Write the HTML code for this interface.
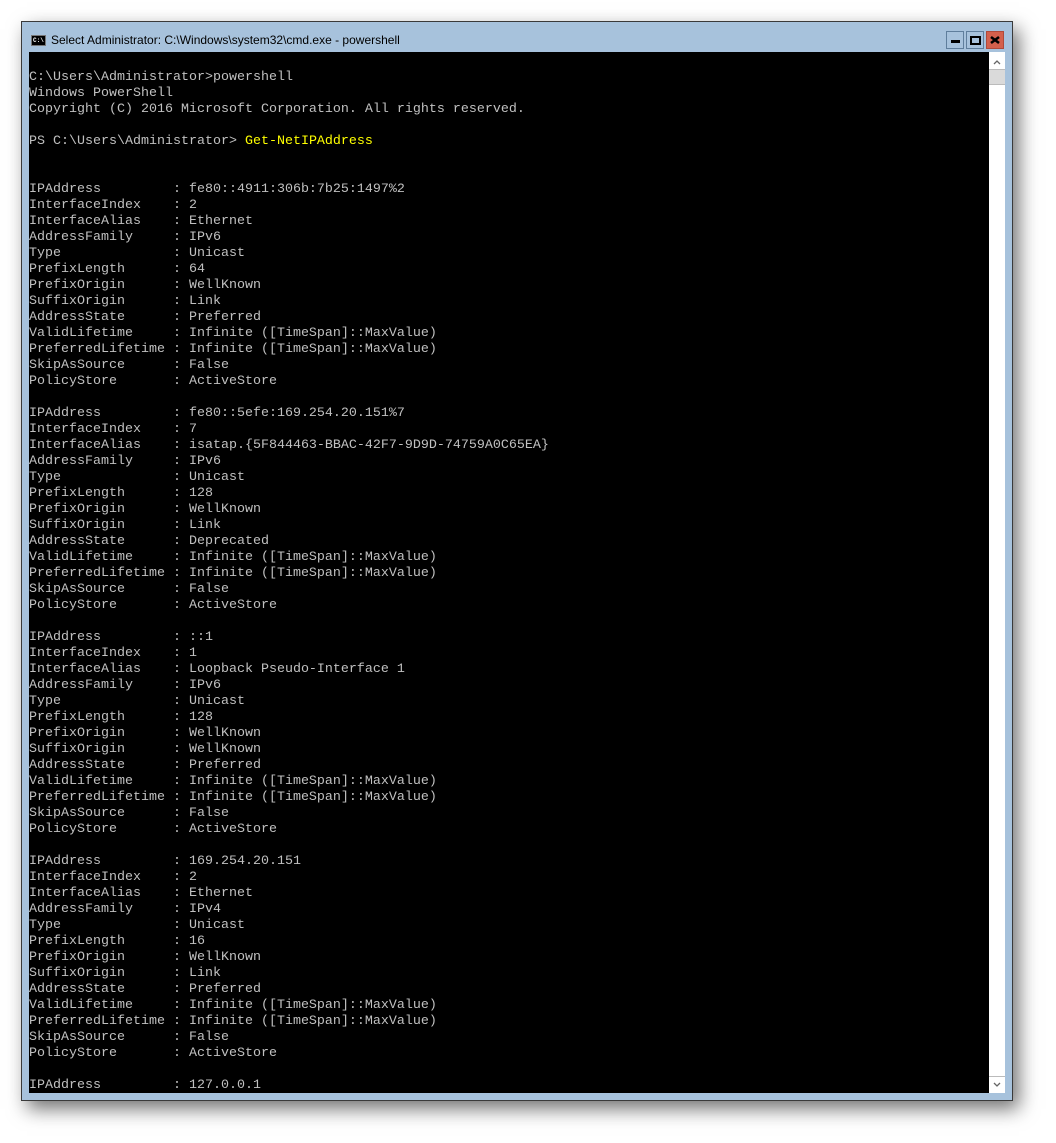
<!DOCTYPE html>
<html><head><meta charset="utf-8"><style>
body{margin:0;width:1056px;height:1143px;background:#fff;position:relative;overflow:hidden}
.win{position:absolute;left:21px;top:21px;width:990px;height:1078px;background:#a7c2dc;border:1px solid #3a3a3a;box-shadow:6px 8px 18px rgba(0,0,0,.55)}
.title{position:absolute;left:29px;top:33px;font:12px "Liberation Sans",sans-serif;color:#000}
.ico{position:absolute;left:31px;top:35px;width:15px;height:11px;background:#000;border:1px solid #777;box-sizing:border-box;color:#fff;font:bold 6px "Liberation Mono",monospace;line-height:9px;padding-left:1px}
.btn{position:absolute;top:31px;width:16px;height:16px;border:1px solid #5f7e9c;background:#a7c2dc}
.con{position:absolute;left:29px;top:52px;width:960px;height:1041px;background:#000;overflow:hidden}
pre{margin:0;position:absolute;left:0;top:18px;font:13.33px/16px "Liberation Mono",monospace;color:#c0c0c0}
.y{color:#ffff00}
.sb{position:absolute;left:989px;top:52px;width:16px;height:1041px;background:#fff}
</style></head><body>
<div class="win"></div>
<div class="ico">C:\</div>
<div class="title" style="left:51px">Select Administrator: C:\Windows\system32\cmd.exe - powershell</div>
<div class="btn" style="left:946px"><div style="position:absolute;left:4px;top:8px;width:9px;height:3px;background:#000"></div></div>
<div class="btn" style="left:966px"><div style="position:absolute;left:3px;top:4px;width:7px;height:5px;border:2px solid #000"></div></div>
<div class="btn" style="left:986px;background:#d4604c;border-color:#b04a3a"><svg width="16" height="16" style="position:absolute;left:0;top:0"><path d="M4 5L12 11M12 5L4 11" stroke="#000" stroke-width="2.6"/></svg></div>
<div class="con"><pre>C:\Users\Administrator&gt;powershell
Windows PowerShell
Copyright (C) 2016 Microsoft Corporation. All rights reserved.

PS C:\Users\Administrator&gt; <span class="y">Get-NetIPAddress</span>


IPAddress         : fe80::4911:306b:7b25:1497%2
InterfaceIndex    : 2
InterfaceAlias    : Ethernet
AddressFamily     : IPv6
Type              : Unicast
PrefixLength      : 64
PrefixOrigin      : WellKnown
SuffixOrigin      : Link
AddressState      : Preferred
ValidLifetime     : Infinite ([TimeSpan]::MaxValue)
PreferredLifetime : Infinite ([TimeSpan]::MaxValue)
SkipAsSource      : False
PolicyStore       : ActiveStore

IPAddress         : fe80::5efe:169.254.20.151%7
InterfaceIndex    : 7
InterfaceAlias    : isatap.{5F844463-BBAC-42F7-9D9D-74759A0C65EA}
AddressFamily     : IPv6
Type              : Unicast
PrefixLength      : 128
PrefixOrigin      : WellKnown
SuffixOrigin      : Link
AddressState      : Deprecated
ValidLifetime     : Infinite ([TimeSpan]::MaxValue)
PreferredLifetime : Infinite ([TimeSpan]::MaxValue)
SkipAsSource      : False
PolicyStore       : ActiveStore

IPAddress         : ::1
InterfaceIndex    : 1
InterfaceAlias    : Loopback Pseudo-Interface 1
AddressFamily     : IPv6
Type              : Unicast
PrefixLength      : 128
PrefixOrigin      : WellKnown
SuffixOrigin      : WellKnown
AddressState      : Preferred
ValidLifetime     : Infinite ([TimeSpan]::MaxValue)
PreferredLifetime : Infinite ([TimeSpan]::MaxValue)
SkipAsSource      : False
PolicyStore       : ActiveStore

IPAddress         : 169.254.20.151
InterfaceIndex    : 2
InterfaceAlias    : Ethernet
AddressFamily     : IPv4
Type              : Unicast
PrefixLength      : 16
PrefixOrigin      : WellKnown
SuffixOrigin      : Link
AddressState      : Preferred
ValidLifetime     : Infinite ([TimeSpan]::MaxValue)
PreferredLifetime : Infinite ([TimeSpan]::MaxValue)
SkipAsSource      : False
PolicyStore       : ActiveStore

IPAddress         : 127.0.0.1</pre></div>
<div class="sb">
<svg width="16" height="16" style="position:absolute;top:2px;left:0"><path d="M5 10L8 7L11 10" stroke="#666" stroke-width="1.3" fill="none"/></svg>
<div style="position:absolute;left:0;top:17px;width:16px;height:16px;background:#dadada;border-top:1px solid #bbb;border-bottom:1px solid #bbb;box-sizing:border-box"></div>
<div style="position:absolute;left:0;top:1024px;width:16px;height:1px;background:#bbb"></div>
<svg width="16" height="16" style="position:absolute;top:1025px;left:0"><path d="M5 6L8 9L11 6" stroke="#666" stroke-width="1.3" fill="none"/></svg>
</div>
</body></html>
